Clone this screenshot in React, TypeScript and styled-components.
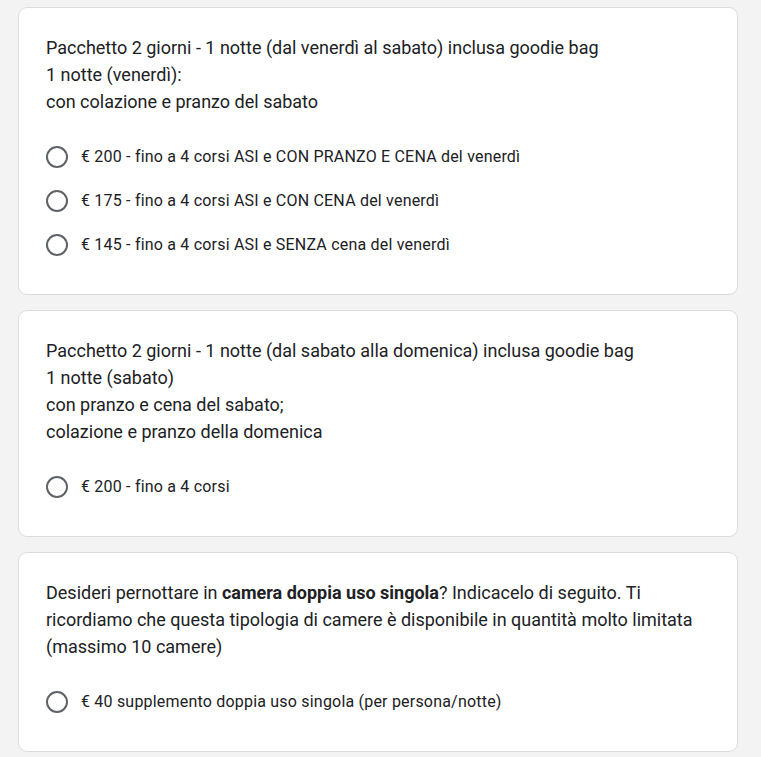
import { FC } from 'react'
import styled, { createGlobalStyle } from 'styled-components'

const GlobalStyle = createGlobalStyle`
  html, body {
    margin: 0;
    padding: 0;
    background: #f3f3f3;
  }

  body {
    font-family: Roboto, Arial, sans-serif;
    color: #202124;
  }
`

const BoldText = styled.b`
  font-weight: 700;
`

interface Question {
  title: React.ReactNode
  options: string[]
}

const questions: Question[] = [
  {
    title: (
      <>
        Pacchetto 2 giorni - 1 notte (dal venerdì al sabato) inclusa goodie bag
        <br />1 notte (venerdì):
        <br />
        con colazione e pranzo del sabato
      </>
    ),
    options: [
      '€ 200 - fino a 4 corsi ASI e CON PRANZO E CENA del venerdì',
      '€ 175 - fino a 4 corsi ASI e CON CENA del venerdì',
      '€ 145 - fino a 4 corsi ASI e SENZA cena del venerdì',
    ],
  },
  {
    title: (
      <>
        Pacchetto 2 giorni - 1 notte (dal sabato alla domenica) inclusa goodie bag
        <br />1 notte (sabato)
        <br />
        con pranzo e cena del sabato;
        <br />
        colazione e pranzo della domenica
      </>
    ),
    options: ['€ 200 - fino a 4 corsi'],
  },
  {
    title: (
      <>
        Desideri pernottare in <BoldText>camera doppia uso singola</BoldText>? Indicacelo di
        seguito. Ti ricordiamo che questa tipologia di camere è disponibile in quantità molto
        limitata (massimo 10 camere)
      </>
    ),
    options: ['€ 40 supplemento doppia uso singola (per persona/notte)'],
  },
]

const App: FC = () => {
  return (
    <>
      <GlobalStyle />
      <Page>
        {questions.map((q, i) => (
          <Card key={i}>
            <Title>{q.title}</Title>
            <OptionList>
              {q.options.map((opt) => (
                <Option key={opt}>
                  <Radio />
                  <OptionLabel>{opt}</OptionLabel>
                </Option>
              ))}
            </OptionList>
          </Card>
        ))}
      </Page>
    </>
  )
}

export default App

const Page = styled.div`
  width: 720px;
  margin-left: 18px;
  padding-top: 7px;

  display: flex;
  flex-direction: column;
  gap: 15px;
`

const Card = styled.section`
  background: #fff;
  border: 1px solid #dadce0;
  border-radius: 9px;
  padding: 26px 26px 27px 27px;
`

const Title = styled.div`
  font-size: 18px;
  line-height: 27px;
  color: #202124;
`

const OptionList = styled.div`
  margin-top: 20px;
  display: flex;
  flex-direction: column;
`

const Option = styled.label`
  height: 44px;
  display: flex;
  align-items: center;
  gap: 13px;
`

const Radio = styled.span`
  width: 22px;
  height: 22px;
  box-sizing: border-box;
  border: 2px solid #5f6368;
  border-radius: 50%;
  flex-shrink: 0;
`

const OptionLabel = styled.span`
  font-size: 16px;
  line-height: 22px;
  letter-spacing: 0.2px;
  color: #202124;
`
